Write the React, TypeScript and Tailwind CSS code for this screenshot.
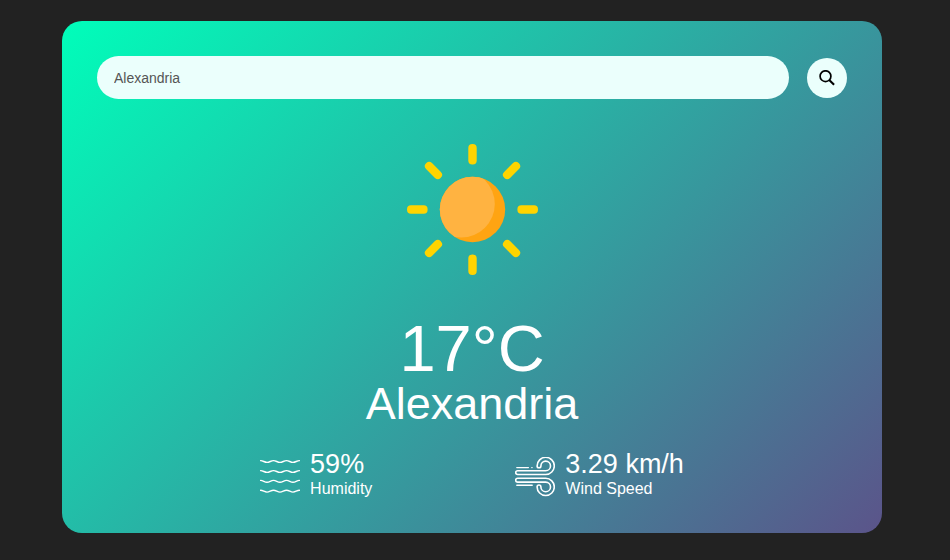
import { useState } from "react";

const RAY_ANGLES = [0, 45, 90, 135, 180, 225, 270, 315];

function SunIcon() {
  return (
    <svg viewBox="0 0 131 131" className="h-[131px] w-[131px]" role="img" aria-label="Clear sky">
      <defs>
        <clipPath id="sun-disc">
          <circle cx="65.5" cy="65.5" r="32.7" />
        </clipPath>
      </defs>
      {RAY_ANGLES.map((angle) => (
        <rect
          key={angle}
          x="61.3"
          y="0"
          width="8.4"
          height="20.6"
          rx="4"
          fill="#ffd400"
          transform={`rotate(${angle} 65.5 65.5)`}
        />
      ))}
      <circle cx="65.5" cy="65.5" r="32.7" fill="#ffa412" />
      <circle cx="54.2" cy="60" r="33.6" fill="#ffb341" clipPath="url(#sun-disc)" />
    </svg>
  );
}

function SearchIcon() {
  return (
    <svg viewBox="0 0 16 16" className="h-4 w-4" fill="none" stroke="#000" strokeWidth="1.7" aria-hidden="true">
      <circle cx="6.5" cy="6.2" r="5.4" />
      <path d="M10.2 9.9 15.1 14.8" strokeWidth="2.1" />
    </svg>
  );
}

function HumidityIcon() {
  return (
    <svg viewBox="0 0 40 40" className="mb-px h-10 w-10" fill="none" stroke="#fff" strokeWidth="1.4" strokeLinecap="round" aria-hidden="true">
      {[4.3, 14.3, 24.1, 34].map((y) => (
        <path
          key={y}
          d={`M.6 ${y - 0.7}c2.6 0 3.8 1.8 6.4 1.8s3.9-1.8 6.5-1.8 3.9 1.8 6.5 1.8 3.9-1.8 6.5-1.8 3.9 1.8 6.5 1.8 3.8-1.8 6.4-1.8`}
        />
      ))}
    </svg>
  );
}

function WindIcon() {
  return (
    <svg viewBox="0 0 40 40" className="mb-px h-10 w-10" fill="none" stroke="#fff" strokeWidth="1.6" strokeLinecap="round" aria-hidden="true">
      <path d="M30.7 17.5H2.6a1.9 1.9 0 0 1 0-3.8h28.1a4.8 4.8 0 1 0-4.8-4.8a1.9 1.9 0 0 1-3.8 0A8.6 8.6 0 1 1 30.7 17.5Z" />
      <path d="M30.7 21.3H2.6a1.9 1.9 0 0 0 0 3.8h28.1a4.8 4.8 0 1 1-4.8 4.8a1.9 1.9 0 0 0-3.8 0A8.6 8.6 0 1 0 30.7 21.3Z" />
      <path d="M1.8 10.6h11.6M16.8 10.6h.3M1.8 28.2h15.4" strokeWidth="1.4" />
    </svg>
  );
}

function Detail({ icon, value, label }: { icon: React.ReactNode; value: string; label: string }) {
  return (
    <div className="flex items-end gap-2.5">
      {icon}
      <div>
        <p className="text-[27px] leading-8">{value}</p>
        <p className="text-base leading-[18px]">{label}</p>
      </div>
    </div>
  );
}

export default function App() {
  const [city, setCity] = useState("Alexandria");

  return (
    <div className="min-h-screen bg-[#222] pt-[21px] pr-1.5 pb-[27px] font-['Liberation_Sans',Arial,sans-serif]">
      <main className="mx-auto w-[87%] max-w-[820px] rounded-[20px] bg-linear-[135deg,#00feba,#5b548a] p-[35px] text-center text-white">
        <form className="flex items-center gap-[18px]" onSubmit={(e) => e.preventDefault()}>
          <input
            type="text"
            aria-label="City name"
            value={city}
            onChange={(e) => setCity(e.target.value)}
            className="h-[43px] min-w-0 flex-1 rounded-full bg-[#ebfffc] px-[17px] text-sm text-[#555] outline-none"
          />
          <button
            type="submit"
            aria-label="Search"
            className="flex h-10 w-10 shrink-0 items-center justify-center rounded-full bg-[#ebfffc]"
          >
            <SearchIcon />
          </button>
        </form>

        <section className="mt-[45px] flex flex-col items-center">
          <SunIcon />
          <h1 className="mt-11 text-[65px] leading-[60px]">17°C</h1>
          <h2 className="text-[45px] leading-[50px]">Alexandria</h2>
        </section>

        <section className="mt-[19px] flex flex-wrap justify-center gap-x-[143px] gap-y-5 text-left">
          <Detail icon={<HumidityIcon />} value="59%" label="Humidity" />
          <Detail icon={<WindIcon />} value="3.29 km/h" label="Wind Speed" />
        </section>
      </main>
    </div>
  );
}
